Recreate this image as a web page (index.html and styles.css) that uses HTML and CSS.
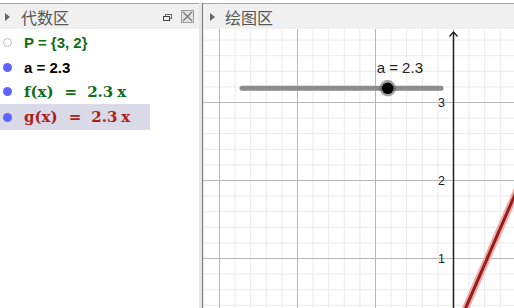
FILE: index.html
```html
<!DOCTYPE html>
<html lang="zh">
<head>
  <meta charset="UTF-8">
  <title>GeoGebra</title>
  <link rel="stylesheet" href="styles.css">
</head>
<body>

  <div class="app">
    <section class="panel algebra">
      <div class="dock-bar">
        <span class="toggle"></span>
        <span class="title">代数区</span>
        <span class="dock-btns">
          <svg class="restore-btn" width="9" height="7" viewBox="0 0 9 7">
            <rect x="2.5" y="0.5" width="6" height="4" fill="none" stroke="#666"/>
            <rect x="0.5" y="2.5" width="6" height="4" fill="#f0f0f0" stroke="#444"/>
          </svg>
          <span class="close-btn">
            <svg width="11" height="11" viewBox="0 0 11 11">
              <path d="M1 1 L10 10 M10 1 L1 10" stroke="#777" stroke-width="1.2"/>
            </svg>
          </span>
        </span>
      </div>

      <ul class="items">
        <li class="item">
          <span class="dot hollow"></span>
          <span class="text green">P = {3, 2}</span>
        </li>
        <li class="item">
          <span class="dot"></span>
          <span class="text">a = 2.3</span>
        </li>
        <li class="item math-row">
          <span class="dot"></span>
          <span class="math green"><span>f(x)</span><span class="eq">=</span><span>2.3</span><span class="var">x</span></span>
        </li>
        <li class="item math-row selected">
          <span class="dot"></span>
          <span class="math red"><span>g(x)</span><span class="eq">=</span><span>2.3</span><span class="var">x</span></span>
        </li>
      </ul>
    </section>

    <div class="splitter"></div>

    <section class="panel graphics">
      <div class="dock-bar">
        <span class="toggle"></span>
        <span class="title">绘图区</span>
      </div>

      <div class="canvas">
        <svg class="plot" width="311" height="279" viewBox="0 0 311 279">
          <defs>
            <pattern id="grid" width="78" height="78" x="250" y="229" patternUnits="userSpaceOnUse">
              <g fill="#e9e9e9">
                <rect x="15.6" y="0" width="1" height="78"/>
                <rect x="31.2" y="0" width="1" height="78"/>
                <rect x="46.8" y="0" width="1" height="78"/>
                <rect x="62.4" y="0" width="1" height="78"/>
                <rect x="0" y="15.6" width="78" height="1"/>
                <rect x="0" y="31.2" width="78" height="1"/>
                <rect x="0" y="46.8" width="78" height="1"/>
                <rect x="0" y="62.4" width="78" height="1"/>
              </g>
              <g fill="#b7b7b7">
                <rect x="0" y="0" width="1" height="78"/>
                <rect x="0" y="0" width="78" height="1"/>
              </g>
            </pattern>
          </defs>
          <rect width="311" height="279" fill="url(#grid)" shape-rendering="crispEdges"/>

          <!-- y axis -->
          <line x1="250.5" y1="3" x2="250.5" y2="279" stroke="#1e1e1e" stroke-width="1.5"/>
          <polyline points="246.5,7.5 250.5,3 254.5,7.5" fill="none" stroke="#1e1e1e" stroke-width="1.3"/>

          <g class="tick-label">
            <text x="242" y="77.5">3</text>
            <text x="242" y="155.5">2</text>
            <text x="242" y="233.5">1</text>
          </g>

          <!-- g(x) = 2.3x, selected -->
          <line x1="250.5" y1="307" x2="328.5" y2="127.6" stroke="#f0a8a8" stroke-width="7"/>
          <line x1="250.5" y1="307" x2="328.5" y2="127.6" stroke="#981c1c" stroke-width="3"/>

          <!-- slider a -->
          <line x1="39" y1="59.3" x2="238" y2="59.3" stroke="#8c8c8c" stroke-width="5" stroke-linecap="round"/>
          <circle cx="184.7" cy="59.3" r="8.2" fill="#555" fill-opacity="0.55"/>
          <circle cx="184.7" cy="59.3" r="5.8" fill="#000"/>
          <text class="slider-label" x="173.7" y="43.7">a = 2.3</text>
        </svg>
      </div>
    </section>
  </div>

</body>
</html>
```

FILE: styles.css
```css
* {
  margin: 0;
  padding: 0;
  box-sizing: border-box;
}

body {
  background-color: #ffffff;
  font-family: "Liberation Sans", Arial, sans-serif;
}

.app {
  display: flex;
  height: 308px;
  padding-top: 3px;
  overflow: hidden;
}

.panel {
  display: flex;
  flex-direction: column;
}

.algebra {
  width: 199px;
}

.graphics {
  flex: 1;
}

.splitter {
  width: 4px;
  background-color: #e6e6e6;
  border-right: 1px solid #777;
}

.dock-bar {
  height: 26px;
  display: flex;
  align-items: center;
  background-color: #f0f0f0;
  border-top: 1px solid #a6a6a6;
  padding-left: 5px;
}

.graphics .dock-bar {
  padding-left: 7px;
}

.toggle {
  width: 0;
  height: 0;
  border-top: 4px solid transparent;
  border-bottom: 4px solid transparent;
  border-left: 5px solid #666;
}

.title {
  margin-left: 11px;
  font-family: "Noto Sans CJK SC", sans-serif;
  font-size: 16px;
  color: #555;
  margin-top: 1px;
}

.graphics .title {
  margin-left: 10px;
}

.dock-btns {
  margin-left: auto;
  display: flex;
  align-items: center;
  gap: 9px;
  padding-right: 5px;
}

.restore-btn {
  display: block;
  margin-top: 1px;
}

.close-btn {
  width: 13px;
  height: 13px;
  border: 1px solid #9c9c9c;
  background-color: #e2e2e2;
  display: flex;
  align-items: center;
  justify-content: center;
}

.close-btn svg {
  display: block;
}

.items {
  list-style: none;
  padding-top: 1px;
}

.item {
  display: flex;
  align-items: center;
  height: 24px;
  padding-left: 3px;
}

.item:first-child {
  height: 25px;
}

.math-row {
  height: 25px;
}

.selected {
  width: 150px;
  height: 26px;
  background-color: #d9d9e8;
}

.dot {
  width: 9px;
  height: 9px;
  border-radius: 50%;
  background-color: #6262ff;
  flex-shrink: 0;
}

.dot.hollow {
  background-color: #fff;
  border: 1px solid #bdbdbd;
}

.text {
  margin-left: 12px;
  font-size: 15px;
  font-weight: bold;
  color: #000;
}

.math {
  margin-left: 12px;
  display: flex;
  align-items: baseline;
  font-family: "DejaVu Serif", serif;
  font-size: 15px;
  font-weight: bold;
}

.math .eq {
  margin: 0 10px 0 11px;
}

.math .var {
  margin-left: 4px;
}

.green {
  color: #146c14;
}

.red {
  color: #b01c1c;
}

.canvas {
  flex: 1;
  overflow: hidden;
}

.plot {
  display: block;
}

.tick-label text {
  font-family: "Liberation Sans", Arial, sans-serif;
  font-size: 12.5px;
  fill: #222;
  text-anchor: end;
}

.slider-label {
  font-family: "Liberation Sans", Arial, sans-serif;
  font-size: 15px;
  fill: #222;
}
```
